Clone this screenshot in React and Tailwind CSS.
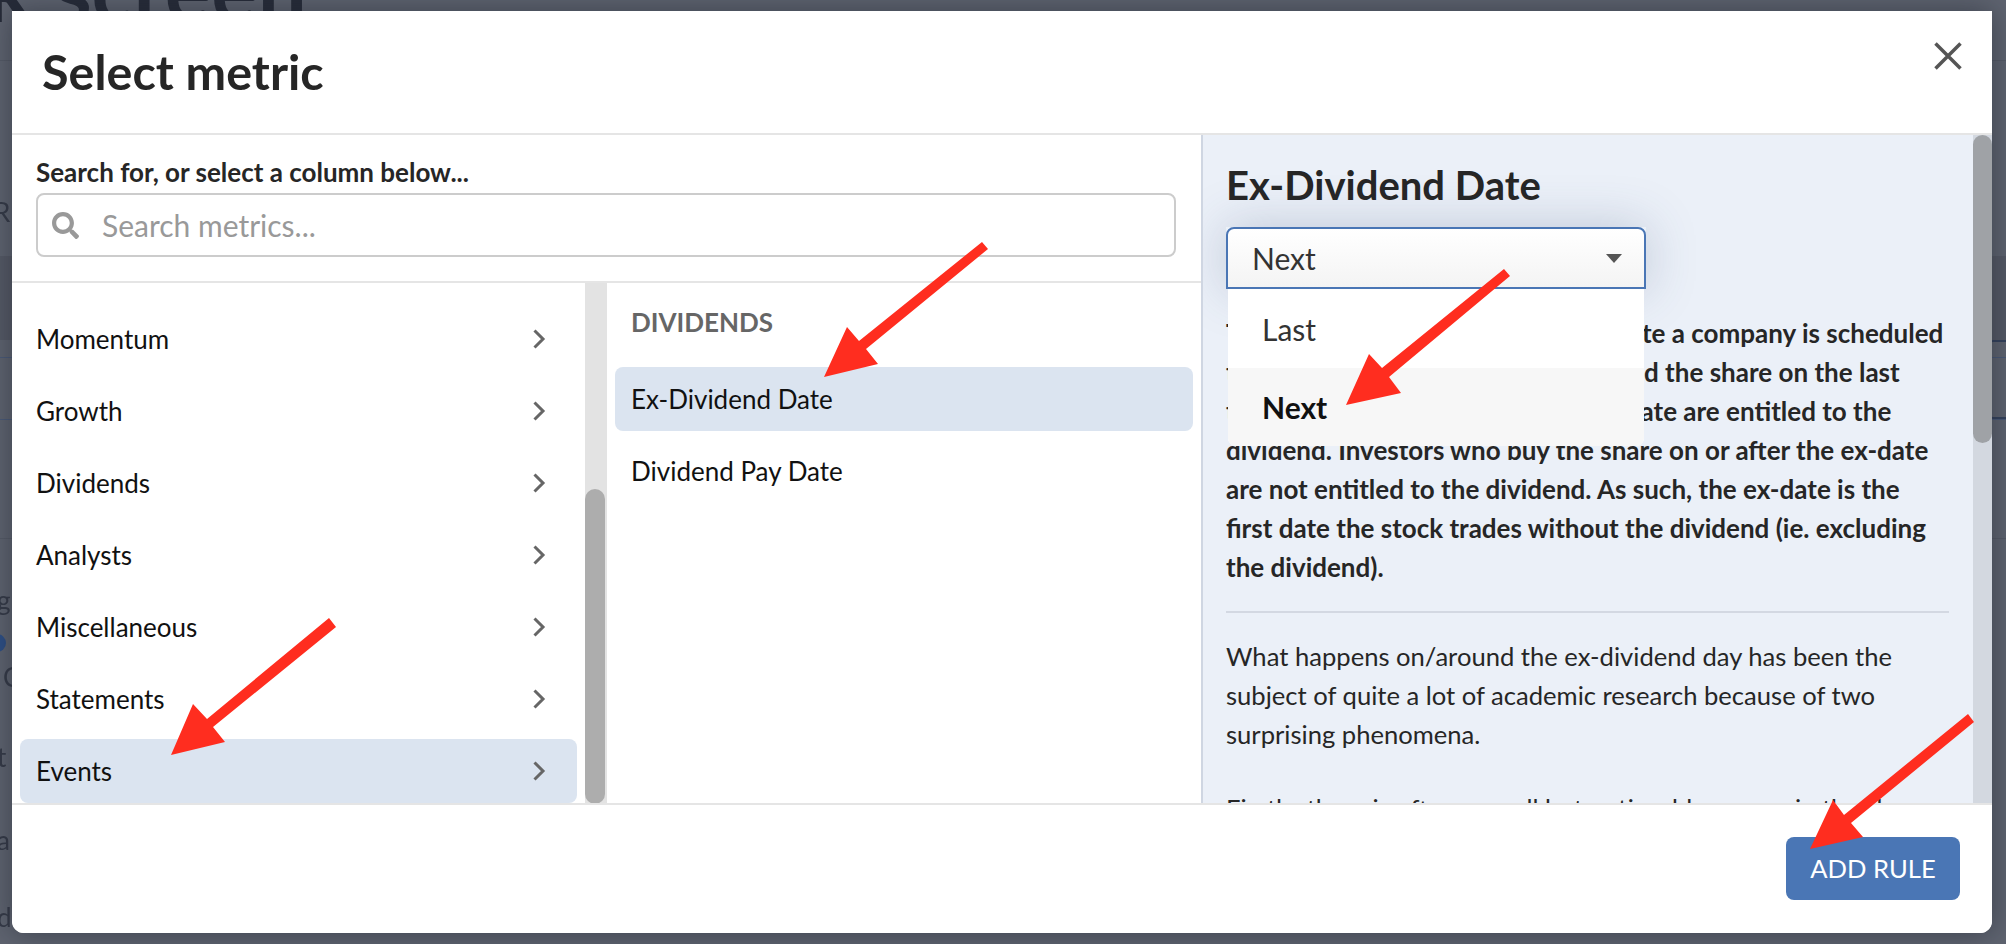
import React from 'react';
import { FaSearch } from 'react-icons/fa';

const CATEGORIES = ['Momentum', 'Growth', 'Dividends', 'Analysts', 'Miscellaneous', 'Statements', 'Events'];

const ARROWS = [
  '329,618 336,627 213,727 225,742 171,755 193,704 207,719',
  '982,242 988,249 866,349 878,364 824,377 847,327 859,341',
  '1504,269 1510,276 1389,377 1401,393 1346,405 1369,354 1382,368',
  '1968,714 1974,722 1851,823 1863,837 1810,849 1833,800 1844,815',
];

function Chevron() {
  return (
    <svg width="14" height="20" viewBox="0 0 14 20" fill="none" className="shrink-0">
      <path d="M2.5 1.5 L11 10 L2.5 18.5" stroke="#666" strokeWidth="3" />
    </svg>
  );
}

function Backdrop() {
  return (
    <div className="absolute inset-0 overflow-hidden bg-[#5f6470] text-[#353a47] font-['Lato',sans-serif] blur-[0.6px]">
      <div className="absolute left-0 right-0 top-[60px] h-px bg-[#565b67]" />
      <div className="absolute left-0 right-0 top-[256px] h-[84px] bg-[#565a66]" />
      <div className="absolute left-0 right-0 top-[357px] h-px bg-[#4a5a78]" />
      <div className="absolute left-0 right-0 top-[419px] h-px bg-[#4a5a78]" />
      <div className="absolute left-0 right-0 top-[538px] h-px bg-[#565b67]" />
      <div className="absolute left-[-184px] top-[-55px] text-[87px] leading-[87px] font-bold text-[#262b38] whitespace-nowrap">Stock screen</div>
      <div className="absolute left-[-6px] top-[197px] text-[26px] leading-[30px]">R</div>
      <div className="absolute left-[-3px] top-[585px] text-[26px] leading-[30px]">g</div>
      <div className="absolute left-[-12px] top-[634px] w-[18px] h-[18px] rounded-full bg-[#2d4f86]" />
      <div className="absolute left-[3px] top-[662px] text-[26px] leading-[30px]">C</div>
      <div className="absolute left-[-3px] top-[742px] text-[26px] leading-[30px]">t</div>
      <div className="absolute left-[-3px] top-[825px] text-[26px] leading-[30px]">a</div>
      <div className="absolute left-[-3px] top-[902px] text-[26px] leading-[30px]">d</div>
      <div className="absolute left-[1985px] top-[340px] w-[60px] h-[79px] rounded-lg border-2 border-[#33415c]" />
    </div>
  );
}

export default function App() {
  return (
    <div className="relative w-full h-[944px] overflow-hidden font-['Lato',sans-serif]">
      <Backdrop />

      <div className="absolute left-[12px] top-[11px] w-[1980px] h-[922px] bg-white rounded-b-xl flex flex-col overflow-hidden shadow-[0_0_30px_rgba(30,35,45,0.55)]">
        <header className="h-[124px] shrink-0 border-b-2 border-[#e5e5e5] pl-[30px] pr-[30px] flex items-center justify-between">
          <h1 className="text-[48.5px] font-bold text-[#262626] relative top-[-1px]">Select metric</h1>
          <svg width="28" height="28" viewBox="0 0 28 28" className="relative top-[-16px] right-[0px]">
            <path d="M1.5 1.5 L26.5 26.5 M26.5 1.5 L1.5 26.5" stroke="#555" strokeWidth="3.5" />
          </svg>
        </header>

        <div className="flex-1 min-h-0 flex">
          <div className="w-[1189px] shrink-0 flex flex-col">
            <div className="h-[148px] shrink-0 border-b-2 border-[#e5e5e5] px-[24px] pt-[22px]">
              <label className="block text-[26px] leading-[30px] font-bold text-[#262626]">Search for, or select a column below...</label>
              <div className="mt-[6px] w-[1140px] h-[64px] border-2 border-[#cccccc] rounded-lg flex items-center pl-[14px]">
                <FaSearch className="text-[#999] w-[27px] h-[27px] shrink-0" />
                <span className="ml-[23px] text-[30px] text-[#999]">Search metrics...</span>
              </div>
            </div>

            <div className="flex-1 min-h-0 flex">
              <div className="w-[573px] shrink-0 pl-[8px] pr-[8px] pt-[24px] flex flex-col gap-[8px]">
                {CATEGORIES.map((name) => (
                  <div
                    key={name}
                    className={`h-[64px] shrink-0 rounded-lg pl-[16px] pr-[31px] flex items-center justify-between text-[26px] text-[#111] ${
                      name === 'Events' ? 'bg-[#dbe4f0]' : ''
                    }`}
                  >
                    <span>{name}</span>
                    <Chevron />
                  </div>
                ))}
              </div>

              <div className="w-[22px] shrink-0 bg-[#e3e3e3] pt-[206px]">
                <div className="w-[20px] h-[315px] rounded-full bg-[#adadad]" />
              </div>

              <div className="flex-1 pl-[8px] pr-[8px] pt-[20px]">
                <div className="pl-[16px] h-[38px] flex items-center text-[26px] font-bold text-[#666]">DIVIDENDS</div>
                <div className="mt-[26px] flex flex-col gap-[8px]">
                  <div className="h-[64px] rounded-lg bg-[#dbe4f0] pl-[16px] flex items-center text-[26px] text-[#111]">Ex-Dividend Date</div>
                  <div className="h-[64px] rounded-lg pl-[16px] flex items-center text-[26px] text-[#111]">Dividend Pay Date</div>
                </div>
              </div>
            </div>
          </div>

          <aside className="relative flex-1 min-w-0 bg-[#ebf0f8] border-l-2 border-[#cfd6e2] overflow-hidden">
            <div className="absolute right-0 top-0 bottom-0 w-[19px] bg-[#d3d8e0]">
              <div className="w-[19px] h-[308px] rounded-full bg-[#9fa2a6]" />
            </div>

            <div className="pl-[23px] w-[748px] text-[25.6px] leading-[39px] text-[#262626]">
              <h2 className="mt-[28px] text-[40px] leading-[44px] font-bold text-[#262626]">Ex-Dividend Date</h2>

              <div className="relative z-10 mt-[20px] w-[420px] shadow-[0_0_50px_rgba(60,80,120,0.25)]">
                <div className="h-[62px] rounded-t-lg border-2 border-[#4a76b5] bg-gradient-to-b from-white to-[#f4f4f4] pl-[24px] pr-[22px] flex items-center justify-between text-[30px] text-[#333]">
                  <span>Next</span>
                  <span className="w-0 h-0 border-x-[8px] border-x-transparent border-t-[9px] border-t-[#555]" />
                </div>
                <div className="absolute left-[2px] right-[2px] top-[62px] bg-white rounded-b-lg overflow-hidden text-[30px]">
                  <div className="h-[79px] pl-[34px] pt-[2px] flex items-center text-[#333]">Last</div>
                  <div className="h-[78px] pl-[34px] flex items-center bg-[#f7f7f7] font-bold text-[#111]">Next</div>
                </div>
              </div>

              <p className="mt-[25px] text-[26px] font-bold whitespace-nowrap">
                The ex-dividend date is the exact date a company is scheduled<br />
                to go ex-dividend. Investors who held the share on the last<br />
                trading day directly before that ex-date are entitled to the<br />
                dividend. Investors who buy the share on or after the ex-date<br />
                are not entitled to the dividend. As such, the ex-date is the<br />
                first date the stock trades without the dividend (ie. excluding<br />
                the dividend).
              </p>

              <hr className="mt-[24px] border-0 h-[2px] bg-[#d3d8e2] w-[723px]" />

              <p className="mt-[24px] whitespace-nowrap">
                What happens on/around the ex-dividend day has been the<br />
                subject of quite a lot of academic research because of two<br />
                surprising phenomena.
              </p>

              <p className="mt-[35px] whitespace-nowrap">Firstly, there is often a small but noticeable run-up in the share</p>
            </div>
          </aside>
        </div>

        <footer className="h-[130px] shrink-0 border-t-2 border-[#e5e5e5] bg-white flex justify-end pt-[32px] pr-[32px]">
          <button className="w-[174px] h-[63px] rounded-lg bg-[#4a76b5] text-white text-[25.6px]">ADD RULE</button>
        </footer>
      </div>

      <svg className="absolute z-20 inset-0 w-[2006px] h-[944px] pointer-events-none" viewBox="0 0 2006 944">
        {ARROWS.map((points) => (
          <polygon key={points} points={points} fill="#ff2d1f" />
        ))}
      </svg>
    </div>
  );
}
